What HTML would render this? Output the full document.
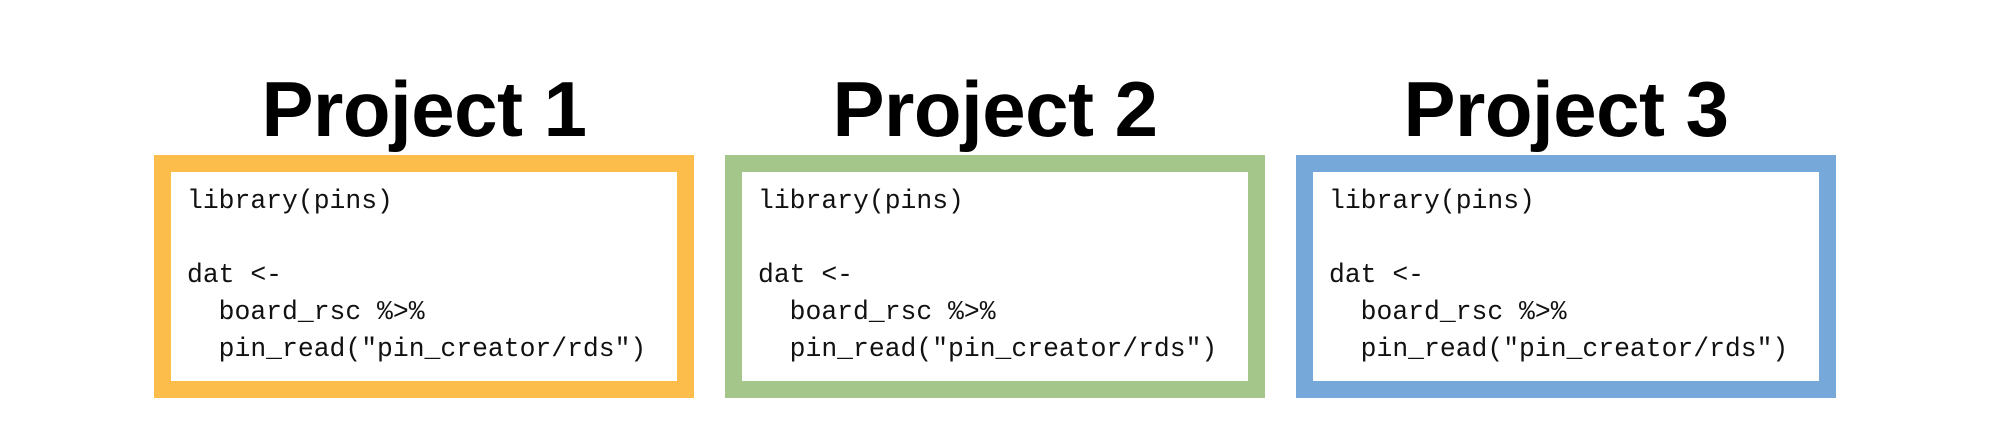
<!DOCTYPE html>
<html><head><style>
html,body{margin:0;padding:0;background:#fff;width:1995px;height:448px;overflow:hidden}
.t{position:absolute;top:64px;width:540px;text-align:center;font:bold 78px/90px "Liberation Sans",sans-serif;color:#000;letter-spacing:-0.5px}
.b{position:absolute;top:155px;width:506px;height:209px;border:17px solid;background:#fff}
pre{margin:0;position:absolute;left:16px;top:11px;font:26.4px/37px "Liberation Mono",monospace;color:#111}
</style></head><body>
<div class="t" style="left:154px">Project 1</div>
<div class="t" style="left:725px">Project 2</div>
<div class="t" style="left:1296px">Project 3</div>
<div class="b" style="left:154px;border-color:#FDBD4B"><pre>library(pins)

dat &lt;-
  board_rsc %&gt;%
  pin_read("pin_creator/rds")</pre></div>
<div class="b" style="left:725px;border-color:#A4C68A"><pre>library(pins)

dat &lt;-
  board_rsc %&gt;%
  pin_read("pin_creator/rds")</pre></div>
<div class="b" style="left:1296px;border-color:#76A9D9"><pre>library(pins)

dat &lt;-
  board_rsc %&gt;%
  pin_read("pin_creator/rds")</pre></div>
</body></html>
